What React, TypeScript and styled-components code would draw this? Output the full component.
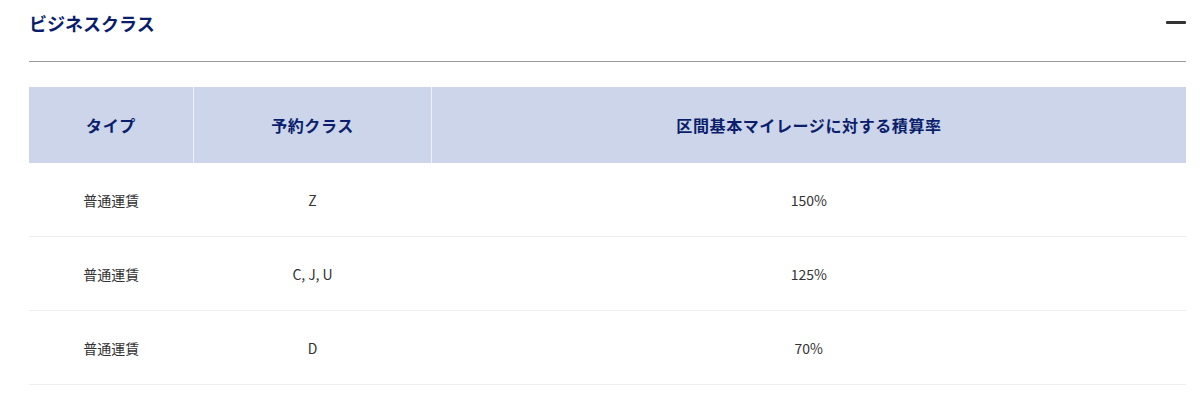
import styled, { createGlobalStyle } from 'styled-components';

const GlobalStyle = createGlobalStyle`
  body {
    margin: 0;
    background: #ffffff;
    font-family: "Noto Sans CJK JP", "Noto Sans", sans-serif;
  }
`;

const Section = styled.section`
  width: 1157px;
  margin-left: 29px;
`;

const TitleRow = styled.div`
  display: flex;
  align-items: center;
  justify-content: space-between;
  padding-top: 8px;
  height: 30px;
`;

const Title = styled.h2`
  margin: 0;
  font-size: 18px;
  line-height: 30px;
  font-weight: 700;
  color: #0b1e6b;
`;

const ToggleButton = styled.button`
  display: flex;
  align-items: center;
  justify-content: center;
  width: 20px;
  height: 20px;
  margin-top: -2px;
  padding: 0;
  border: none;
  background: none;
  cursor: pointer;
`;

const Minus = styled.span`
  display: block;
  width: 20px;
  height: 3px;
  border-radius: 1px;
  background: #333333;
`;

const Divider = styled.hr`
  margin: 23px 0 0;
  border: none;
  border-top: 1px solid #9a9a9a;
`;

const Table = styled.table`
  width: 100%;
  margin-top: 25px;
  border-collapse: collapse;
  table-layout: fixed;
`;

const HeadCell = styled.th<{ width?: number }>`
  width: ${({ width }) => (width ? `${width}px` : 'auto')};
  height: 76px;
  padding: 0;
  background: #ccd5e9;
  border-left: 1px solid #eef1f8;
  font-size: 16px;
  letter-spacing: 0.6px;
  font-weight: 700;
  color: #0b1e6b;
  text-align: center;
  vertical-align: middle;

  &:first-child {
    border-left: none;
  }
`;

const Row = styled.tr`
  border-bottom: 1px solid #eeeeee;
`;

const Cell = styled.td`
  height: 73px;
  padding: 0;
  font-size: 14px;
  color: #333333;
  text-align: center;
  vertical-align: middle;
`;

const rows = [
  { type: '普通運賃', cls: 'Z', rate: '150%' },
  { type: '普通運賃', cls: 'C, J, U', rate: '125%' },
  { type: '普通運賃', cls: 'D', rate: '70%' },
];

const App = () => (
  <>
    <GlobalStyle />
    <Section>
      <TitleRow>
        <Title>ビジネスクラス</Title>
        <ToggleButton aria-label="閉じる">
          <Minus />
        </ToggleButton>
      </TitleRow>
      <Divider />
      <Table>
        <thead>
          <tr>
            <HeadCell width={164}>タイプ</HeadCell>
            <HeadCell width={237}>予約クラス</HeadCell>
            <HeadCell>区間基本マイレージに対する積算率</HeadCell>
          </tr>
        </thead>
        <tbody>
          {rows.map((r, i) => (
            <Row key={i}>
              <Cell>{r.type}</Cell>
              <Cell>{r.cls}</Cell>
              <Cell>{r.rate}</Cell>
            </Row>
          ))}
        </tbody>
      </Table>
    </Section>
  </>
);

export default App;
